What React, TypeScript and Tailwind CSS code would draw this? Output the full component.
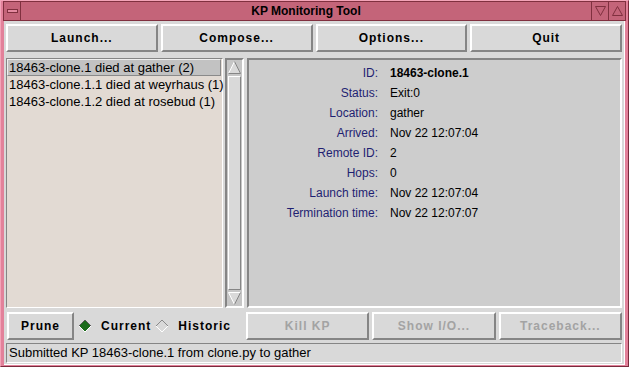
import React from 'react';

const raised =
  'border-2 border-t-white border-l-white border-r-[#858585] border-b-[#858585]';
const sunken =
  'border-2 border-t-[#858585] border-l-[#858585] border-r-white border-b-white';

const details: [string, string][] = [
  ['ID:', '18463-clone.1'],
  ['Status:', 'Exit:0'],
  ['Location:', 'gather'],
  ['Arrived:', 'Nov 22 12:07:04'],
  ['Remote ID:', '2'],
  ['Hops:', '0'],
  ['Launch time:', 'Nov 22 12:07:04'],
  ['Termination time:', 'Nov 22 12:07:07'],
];

const items = [
  '18463-clone.1 died at gather (2)',
  '18463-clone.1.1 died at weyrhaus (1)',
  '18463-clone.1.2 died at rosebud (1)',
];

type BtnProps = { label: string; disabled?: boolean; className?: string };

const Btn: React.FC<BtnProps> = ({ label, disabled, className }) => (
  <div
    className={`${raised} flex items-center justify-center bg-[#d9d9d9] text-[12px] font-bold tracking-[1px] ${
      disabled ? 'text-[#a3a3a3]' : 'text-black'
    } ${className ?? ''}`}
  >
    {label}
  </div>
);

const ArrowUp = () => (
  <svg width="13" height="13" viewBox="0 0 13 13">
    <polygon points="6.5,0.5 12.5,12.5 0.5,12.5" fill="#d9d9d9" />
    <line x1="6.5" y1="0.5" x2="0.5" y2="12.5" stroke="#ffffff" />
    <line x1="6.5" y1="0.5" x2="12.5" y2="12.5" stroke="#858585" />
    <line x1="0.5" y1="12.5" x2="12.5" y2="12.5" stroke="#858585" />
  </svg>
);

const ArrowDown = () => (
  <svg width="13" height="13" viewBox="0 0 13 13">
    <polygon points="0.5,0.5 12.5,0.5 6.5,12.5" fill="#d9d9d9" />
    <line x1="0.5" y1="0.5" x2="12.5" y2="0.5" stroke="#ffffff" />
    <line x1="0.5" y1="0.5" x2="6.5" y2="12.5" stroke="#ffffff" />
    <line x1="12.5" y1="0.5" x2="6.5" y2="12.5" stroke="#858585" />
  </svg>
);

const Diamond = ({ on }: { on: boolean }) => (
  <svg width="14" height="14" viewBox="0 0 14 14">
    <polygon
      points="7,1 13,7 7,13 1,7"
      fill={on ? '#1c6b1c' : '#d9d9d9'}
    />
    <polyline points="1,7 7,1 13,7" fill="none" stroke={on ? '#5a5a5a' : '#8a8a8a'} />
    <polyline points="1,7 7,13 13,7" fill="none" stroke="#ffffff" />
  </svg>
);

export default function App() {
  return (
    <div className="w-[629px] h-[367px] bg-[#e2819a] border border-t-[#f3a4b8] border-l-[#f3a4b8] border-r-[#7a2b3c] border-b-[#7a2b3c] px-[2px] pt-0 pb-[2px] flex flex-col font-['Liberation_Sans',Arial,sans-serif] text-black overflow-hidden">
      {/* title bar */}
      <div className="h-[20px] flex bg-[#c46479] border border-[#80303f]">
        <div className="w-[17px] border-r border-[#80303f] flex items-center justify-center">
          <div className="w-[11px] h-[4px] border border-[#80303f] bg-[#e48aa0]" />
        </div>
        <div className="flex-1 text-center text-[12px] font-bold leading-[18px]">
          KP Monitoring Tool
        </div>
        <div className="w-[17px] border-l border-[#80303f] flex items-center justify-center">
          <svg width="11" height="10" viewBox="0 0 11 10">
            <polygon points="0.5,0.5 10.5,0.5 5.5,9.5" fill="none" stroke="#80303f" />
          </svg>
        </div>
        <div className="w-[17px] border-l border-[#80303f] flex items-center justify-center">
          <svg width="11" height="10" viewBox="0 0 11 10">
            <polygon points="5.5,0.5 10.5,9.5 0.5,9.5" fill="none" stroke="#80303f" />
          </svg>
        </div>
      </div>

      {/* body */}
      <div className="flex-1 mx-[1px] bg-[#d9d9d9] border-b border-r border-white flex flex-col pl-[2px] pr-[2px] pt-[3px]">
        <div className="h-[28px] grid grid-cols-4 gap-[3px]">
          <Btn label="Launch..." />
          <Btn label="Compose..." />
          <Btn label="Options..." />
          <Btn label="Quit" />
        </div>

        <div className="h-[250px] mt-[6px] flex">
          <div className="w-[217px] border border-t-[#858585] border-l-[#858585] border-r-white border-b-white bg-[#e2dad3] text-[13px]">
            {items.map((t, i) => (
              <div
                key={t}
                className={`h-[17px] leading-[16px] pl-[1px] whitespace-nowrap ${
                  i === 0
                    ? 'bg-[#c2c2c2] border border-t-[#eeeeee] border-l-[#eeeeee] border-r-[#8a8a8a] border-b-[#8a8a8a] mr-[1px]'
                    : 'border border-transparent'
                }`}
              >
                {t}
              </div>
            ))}
          </div>

          <div className={`ml-[2px] w-[19px] ${sunken} bg-[#c6c6c6] flex flex-col items-center`}>
            <div className="h-[15px] flex items-center justify-center">
              <ArrowUp />
            </div>
            <div className="flex-1 w-[13px] my-[1px] bg-[#d9d9d9] border border-t-white border-l-white border-r-[#858585] border-b-[#858585]" />
            <div className="h-[15px] flex items-center justify-center">
              <ArrowDown />
            </div>
          </div>

          <div className={`ml-[3px] flex-1 ${sunken} bg-[#cdcdcd] pt-[3px]`}>
            <div className="grid grid-cols-[129px_1fr] gap-x-[12px] text-[12px] leading-[20px]">
              {details.map(([k, v], i) => (
                <React.Fragment key={k}>
                  <div className="text-right text-[#1f1f72]">{k}</div>
                  <div className={i === 0 ? 'font-bold' : ''}>{v}</div>
                </React.Fragment>
              ))}
            </div>
          </div>
        </div>

        <div className="h-[28px] mt-[4px] flex">
          <div className="w-[240px] flex items-center">
            <Btn label="Prune" className="ml-[1px] w-[67px] h-[28px]" />
            <div className="ml-[4px] flex items-center">
              <Diamond on />
            </div>
            <span className="ml-[9px] text-[12px] font-bold tracking-[1px]">Current</span>
            <div className="ml-[4px] flex items-center">
              <Diamond on={false} />
            </div>
            <span className="ml-[9px] text-[12px] font-bold tracking-[1px]">Historic</span>
          </div>
          <div className="flex-1 grid grid-cols-3 gap-[3px]">
            <Btn label="Kill KP" disabled />
            <Btn label="Show I/O..." disabled />
            <Btn label="Traceback..." disabled />
          </div>
        </div>

        <div className="h-[20px] mt-[3px] mb-[1px] border border-t-[#858585] border-l-[#858585] border-r-white border-b-white text-[13px] leading-[18px] pl-[2px] whitespace-nowrap">
          Submitted KP 18463-clone.1 from clone.py to gather
        </div>
      </div>
    </div>
  );
}
